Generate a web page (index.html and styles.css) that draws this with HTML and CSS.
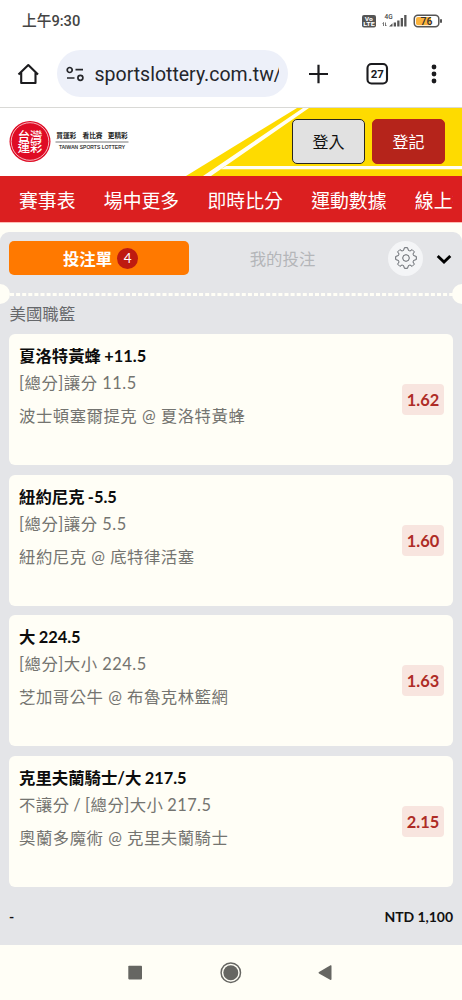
FILE: index.html
```html
<!DOCTYPE html>
<html lang="zh-Hant">
<head>
<meta charset="utf-8">
<title>台灣運彩</title>
<link rel="stylesheet" href="styles.css">
</head>
<body>
<div class="status">
  <span class="clock">上午9:30</span>
  <svg class="status-icons" width="84" height="16" viewBox="0 0 84 16">
    <rect x="2" y="2" width="14" height="12.500" rx="2" fill="#555"/>
    <text class="tiny" x="4.700" y="7.600" font-size="5.500" textLength="8" lengthAdjust="spacingAndGlyphs" fill="#fff">Vo</text>
    <text class="tiny" x="3.300" y="13.300" font-size="5.500" textLength="11.400" lengthAdjust="spacingAndGlyphs" fill="#fff">LTE</text>
    <text class="tiny light" x="24.500" y="6" font-size="6.500" fill="#444">4G</text>
    <path d="M23.500 13V9.500L22.500 10.500M25.500 9.500V13L26.500 12" fill="none" stroke="#555" stroke-width=".8"/>
    <path d="M29 13.500l3.500-3.200v3.200zM33.700 9.500h2.300v4H33.700zM37.200 7.500h2.300v6h-2.300zM40.700 5h2.300v8.500H40.700zM44.200 2h2.300v11.500h-2.300z" fill="#555"/>
    <rect x="54.300" y="2.300" width="24.500" height="11.500" rx="3.500" fill="#fff" stroke="#555" stroke-width="1.500"/>
    <path d="M58 4H71V12.200H58a2 2 0 0 1-2-2V6a2 2 0 0 1 2-2z" fill="#fbb33b"/>
    <rect x="80" y="6" width="2" height="4" rx="1" fill="#555"/>
    <text class="tiny light" x="60.500" y="12" font-size="10.500" fill="#333">76</text>
  </svg>
</div>
<div class="toolbar">
  <svg class="home" width="22" height="22" viewBox="0 0 22 22"><path d="M1.500 11.500L11.300 2L21 11.500M4.200 9.500V20H18.500V9.500" fill="none" stroke="#1b1b1e" stroke-width="2.100" stroke-linejoin="round"/></svg>
  <div class="address">
    <svg width="18" height="16" viewBox="0 0 18 16" fill="none" stroke="#26272b" stroke-width="1.700"><circle cx="3.700" cy="4" r="2.500"/><path d="M9.500 3.700h7.500M1 12h7.500"/><circle cx="14.400" cy="11.800" r="2.500"/></svg>
    <span class="url">sportslottery.com.tw/</span>
  </div>
  <svg class="tools" width="80" height="24" viewBox="0 0 80 24">
    <path d="M0 12h19M9.500 2.800v18.500" stroke="#1b1b1e" stroke-width="2.200"/>
    <rect x="58.500" y="2" width="19.500" height="19.500" rx="4" fill="none" stroke="#1b1b1e" stroke-width="2.100"/>
    <text class="tiny" x="68.300" y="16" font-size="11.500" text-anchor="middle" fill="#1b1b1e">27</text>
  </svg>
  <svg class="more" width="6" height="20" viewBox="0 0 6 20" fill="#1b1b1e"><circle cx="3" cy="3" r="2.400"/><circle cx="3" cy="10" r="2.400"/><circle cx="3" cy="17" r="2.400"/></svg>
</div>
<header class="header">
  <svg class="stripes" width="462" height="68" viewBox="0 0 462 68">
    <path d="M186 68L297 0H462V68z" fill="#fedb00"/>
    <path d="M203 68L303 0H309L211 68zM221 61.300L226 58H462V61.300z" fill="#fffef6"/>
  </svg>
  <svg class="logo" width="122" height="42" viewBox="0 0 122 42">
    <circle cx="21" cy="20.500" r="20.500" fill="#df0b24"/>
    <circle cx="21" cy="20.500" r="18.800" fill="none" stroke="#fff" stroke-width=".7"/>
    <text class="seal" x="21" y="19.500" text-anchor="middle">台灣</text>
    <text class="seal" x="21" y="31" text-anchor="middle">運彩</text>
    <text class="slogan" x="47.300" y="17.300" textLength="20">買運彩</text>
    <text class="slogan" x="73.500" y="17.300" textLength="20">看比賽</text>
    <text class="slogan" x="98.800" y="17.300" textLength="20">更精彩</text>
    <path d="M46.500 21H119.500" stroke="#555" stroke-width=".8"/>
    <text class="english" x="50" y="27.500" textLength="66">TAIWAN SPORTS LOTTERY</text>
  </svg>
  <div class="account">
    <div class="btn login">登入</div>
    <div class="btn register">登記</div>
  </div>
</header>
<nav class="nav"><div class="nav-items"><span>賽事表</span><span>場中更多</span><span>即時比分</span><span>運動數據</span><span>線上投注</span></div></nav>
<main class="slip">
  <div class="tabs">
    <div class="tab active">投注單<span class="count">4</span></div>
    <div class="tab">我的投注</div>
    <div class="gear"><svg width="24" height="24" viewBox="-12 -12 24 24" fill="none" stroke="#62666c" stroke-width="1" stroke-linejoin="round"><path d="M-1.600-10.300H1.600L2.400-7.600Q3.500-7.300 4-6.900L6.100-8.400L8.400-6.100L6.900-4Q7.400-3.300 7.600-2.400L10.300-1.600V1.600L7.600 2.400Q7.400 3.300 6.900 4L8.400 6.100L6.100 8.400L4 6.900Q3.300 7.400 2.400 7.600L1.600 10.300H-1.600L-2.400 7.600Q-3.300 7.400-4 6.900L-6.100 8.400L-8.400 6.100L-6.900 4Q-7.400 3.300-7.600 2.400L-10.300 1.600V-1.600L-7.600-2.400Q-7.400-3.300-6.900-4L-8.400-6.100L-6.100-8.400L-4-6.900Q-3.300-7.400-2.400-7.600Z"/><circle r="3.300"/></svg></div>
    <svg class="chevron" width="16" height="11" viewBox="0 0 16 11"><path d="M1.700 2L8 8L14.300 2" fill="none" stroke="#000" stroke-width="2.900"/></svg>
  </div>
  <div class="tear"><i></i><svg width="462" height="4"><path d="M10 2.500H453" stroke="#fffef6" stroke-width="2.800" stroke-dasharray="4 2.100"/></svg><i></i></div>
  <h2 class="league">美國職籃</h2>
  <div class="cards">
    <article class="card"><div class="bet"><h3>夏洛特黃蜂 +11.5</h3><p>[總分]讓分 11.5</p><p class="match">波士頓塞爾提克 @ 夏洛特黃蜂</p></div><span class="odds">1.62</span></article>
    <article class="card"><div class="bet"><h3>紐約尼克 -5.5</h3><p>[總分]讓分 5.5</p><p class="match">紐約尼克 @ 底特律活塞</p></div><span class="odds">1.60</span></article>
    <article class="card"><div class="bet"><h3>大 224.5</h3><p>[總分]大小 224.5</p><p class="match">芝加哥公牛 @ 布魯克林籃網</p></div><span class="odds">1.63</span></article>
    <article class="card"><div class="bet"><h3>克里夫蘭騎士/大 217.5</h3><p class="combo">不讓分 / [總分]大小 217.5</p><p class="match">奧蘭多魔術 @ 克里夫蘭騎士</p></div><span class="odds">2.15</span></article>
  </div>
  <div class="total"><span>-</span><span>NTD 1,100</span></div>
</main>
<footer class="system">
  <svg width="208" height="24" viewBox="0 0 208 24" fill="#666662">
    <rect x="1.300" y="4.700" width="13.700" height="13.700" rx=".8"/>
    <circle cx="103.800" cy="11.700" r="7.500"/><circle cx="103.800" cy="11.700" r="9.700" fill="none" stroke="#666662" stroke-width="1.500"/>
    <path d="M192 11L203.500 4.300Q204.500 4 204.500 5V18Q204.500 19.300 203.500 19L192 12.500Q190.900 11.700 192 11z"/>
  </svg>
</footer>
</body>
</html>
```

FILE: styles.css
```css
* { box-sizing: border-box; }
body {
  margin: 0;
  width: 462px;
  height: 1000px;
  overflow: hidden;
  display: flex;
  flex-direction: column;
  background: #fffef6;
  font-family: Lato, "Noto Sans CJK TC", sans-serif;
}
svg { display: block; flex: none; }
h2, h3, p { margin: 0; font-weight: 400; }

.status {
  flex: none;
  height: 40px;
  padding: 2px 18px 0 22px;
  display: flex;
  align-items: center;
  justify-content: space-between;
  background: #fff;
}
.clock { font: 500 14.700px/20px Roboto, "Noto Sans CJK TC", sans-serif; color: #444; }
.status-icons { margin-top: -1px; }
.tiny { font-family: Roboto, sans-serif; font-weight: 700; }
.light { font-weight: 500; }

.toolbar {
  flex: none;
  height: 68px;
  padding: 0 25px 0 17px;
  display: flex;
  align-items: center;
  background: #fff;
  border-bottom: 1px solid #d9d9d6;
}
.address {
  width: 231px;
  height: 47px;
  margin-left: 18px;
  padding-left: 9px;
  display: flex;
  align-items: center;
  gap: 10.500px;
  border-radius: 24px;
  background: #edf0f9;
}
.url {
  width: 184.500px;
  padding-top: 2px;
  overflow: hidden;
  white-space: nowrap;
  font: 400 19.500px/28px Roboto, sans-serif;
  color: #24262c;
}
.tools { margin-left: 21px; }
.more { margin-left: auto; }

.header {
  flex: none;
  position: relative;
  height: 68px;
  padding: 0 17px 1px 9px;
  display: flex;
  align-items: center;
  justify-content: space-between;
  background: #fff;
}
.stripes { position: absolute; left: 0; top: 0; }
.logo { position: relative; }
.seal { font: 500 12.300px "Noto Sans CJK TC", sans-serif; fill: #fff; }
.slogan { font: 700 6.700px "Noto Sans CJK TC", sans-serif; fill: #222; }
.english { font: 400 4.900px "Liberation Sans", sans-serif; fill: #222; stroke: #222; stroke-width: .15px; }
.account { position: relative; display: flex; gap: 7px; }
.btn {
  width: 73px;
  height: 45px;
  border-radius: 5px;
  text-align: center;
  font-size: 16px;
  line-height: 43px;
}
.login { background: #e1e1e1; border: 1px solid #29261e; color: #111; }
.register { background: #b5241b; color: #fff; border: 1px solid #b5241b; }

.nav {
  flex: none;
  height: 47px;
  padding: 0 9px 0 19px;
  background: #db1f20;
  border-bottom: 1px solid #ffbcb3;
}
.nav-items {
  display: flex;
  gap: 28.300px;
  overflow: hidden;
  white-space: nowrap;
  font-size: 18.850px;
  line-height: 49px;
  height: 46px;
  color: #fff;
}

.slip {
  height: 713px;
  flex: none;
  margin-top: 9px;
  border-radius: 9px 9px 0 0;
  background: #e4e5e8;
}
.tabs {
  height: 52px;
  padding: 0 9px;
  display: flex;
  align-items: center;
}
.tab {
  width: 187px;
  height: 34px;
  display: flex;
  align-items: center;
  justify-content: center;
  gap: 5px;
  font-size: 16.400px;
  color: #b4b6b9;
}
.active {
  width: 180px;
  padding-left: 3px;
  border-radius: 5px;
  background: #ff7900;
  color: #fff;
  font-weight: 700;
}
.count {
  width: 21px;
  height: 21px;
  border-radius: 50%;
  background: #be1b10;
  font-size: 13.500px;
  font-weight: 400;
  line-height: 21px;
  text-align: center;
}
.gear {
  width: 35px;
  height: 35px;
  margin-left: 12px;
  display: grid;
  place-items: center;
  border-radius: 50%;
  background: #f4f5f7;
}
.chevron { margin: 2px 0 0 13px; }
.tear {
  height: 20px;
  display: flex;
  align-items: center;
  justify-content: space-between;
}
.tear i {
  flex: none;
  width: 20px;
  height: 20px;
  margin: 0 -10px;
  border-radius: 50%;
  background: #fffef6;
}
.league {
  height: 30px;
  padding-left: 9.500px;
  font-size: 16.400px;
  line-height: 20px;
  color: #66686b;
}
.cards { padding: 0 9px; display: grid; gap: 9.500px; }
.card {
  height: 131px;
  padding: 9px 9px 0 10px;
  display: flex;
  justify-content: space-between;
  border-radius: 6px;
  background: #fffef6;
}
.card h3 {
  font-size: 16.400px;
  font-weight: 700;
  line-height: 26px;
  word-spacing: -.7px;
  color: #0c0c0c;
}
.card p {
  font-size: 16.400px;
  letter-spacing: .5px;
  line-height: 28px;
  color: #747470;
}
.card .combo { letter-spacing: .45px; word-spacing: -.8px; }
.card .match { margin-top: 5px; }
.odds {
  width: 42px;
  height: 31px;
  margin-top: 41px;
  border-radius: 4px;
  background: #f8e5df;
  color: #ae2c26;
  font-size: 16.400px;
  font-weight: 700;
  line-height: 31px;
  text-align: center;
}
.total {
  height: 58px;
  padding: 2px 9px 0;
  display: flex;
  align-items: center;
  justify-content: space-between;
  font-size: 14px;
  font-weight: 700;
  letter-spacing: -.05px;
  color: #111;
}
.system {
  height: 55px;
  display: grid;
  place-items: center;
}
```
